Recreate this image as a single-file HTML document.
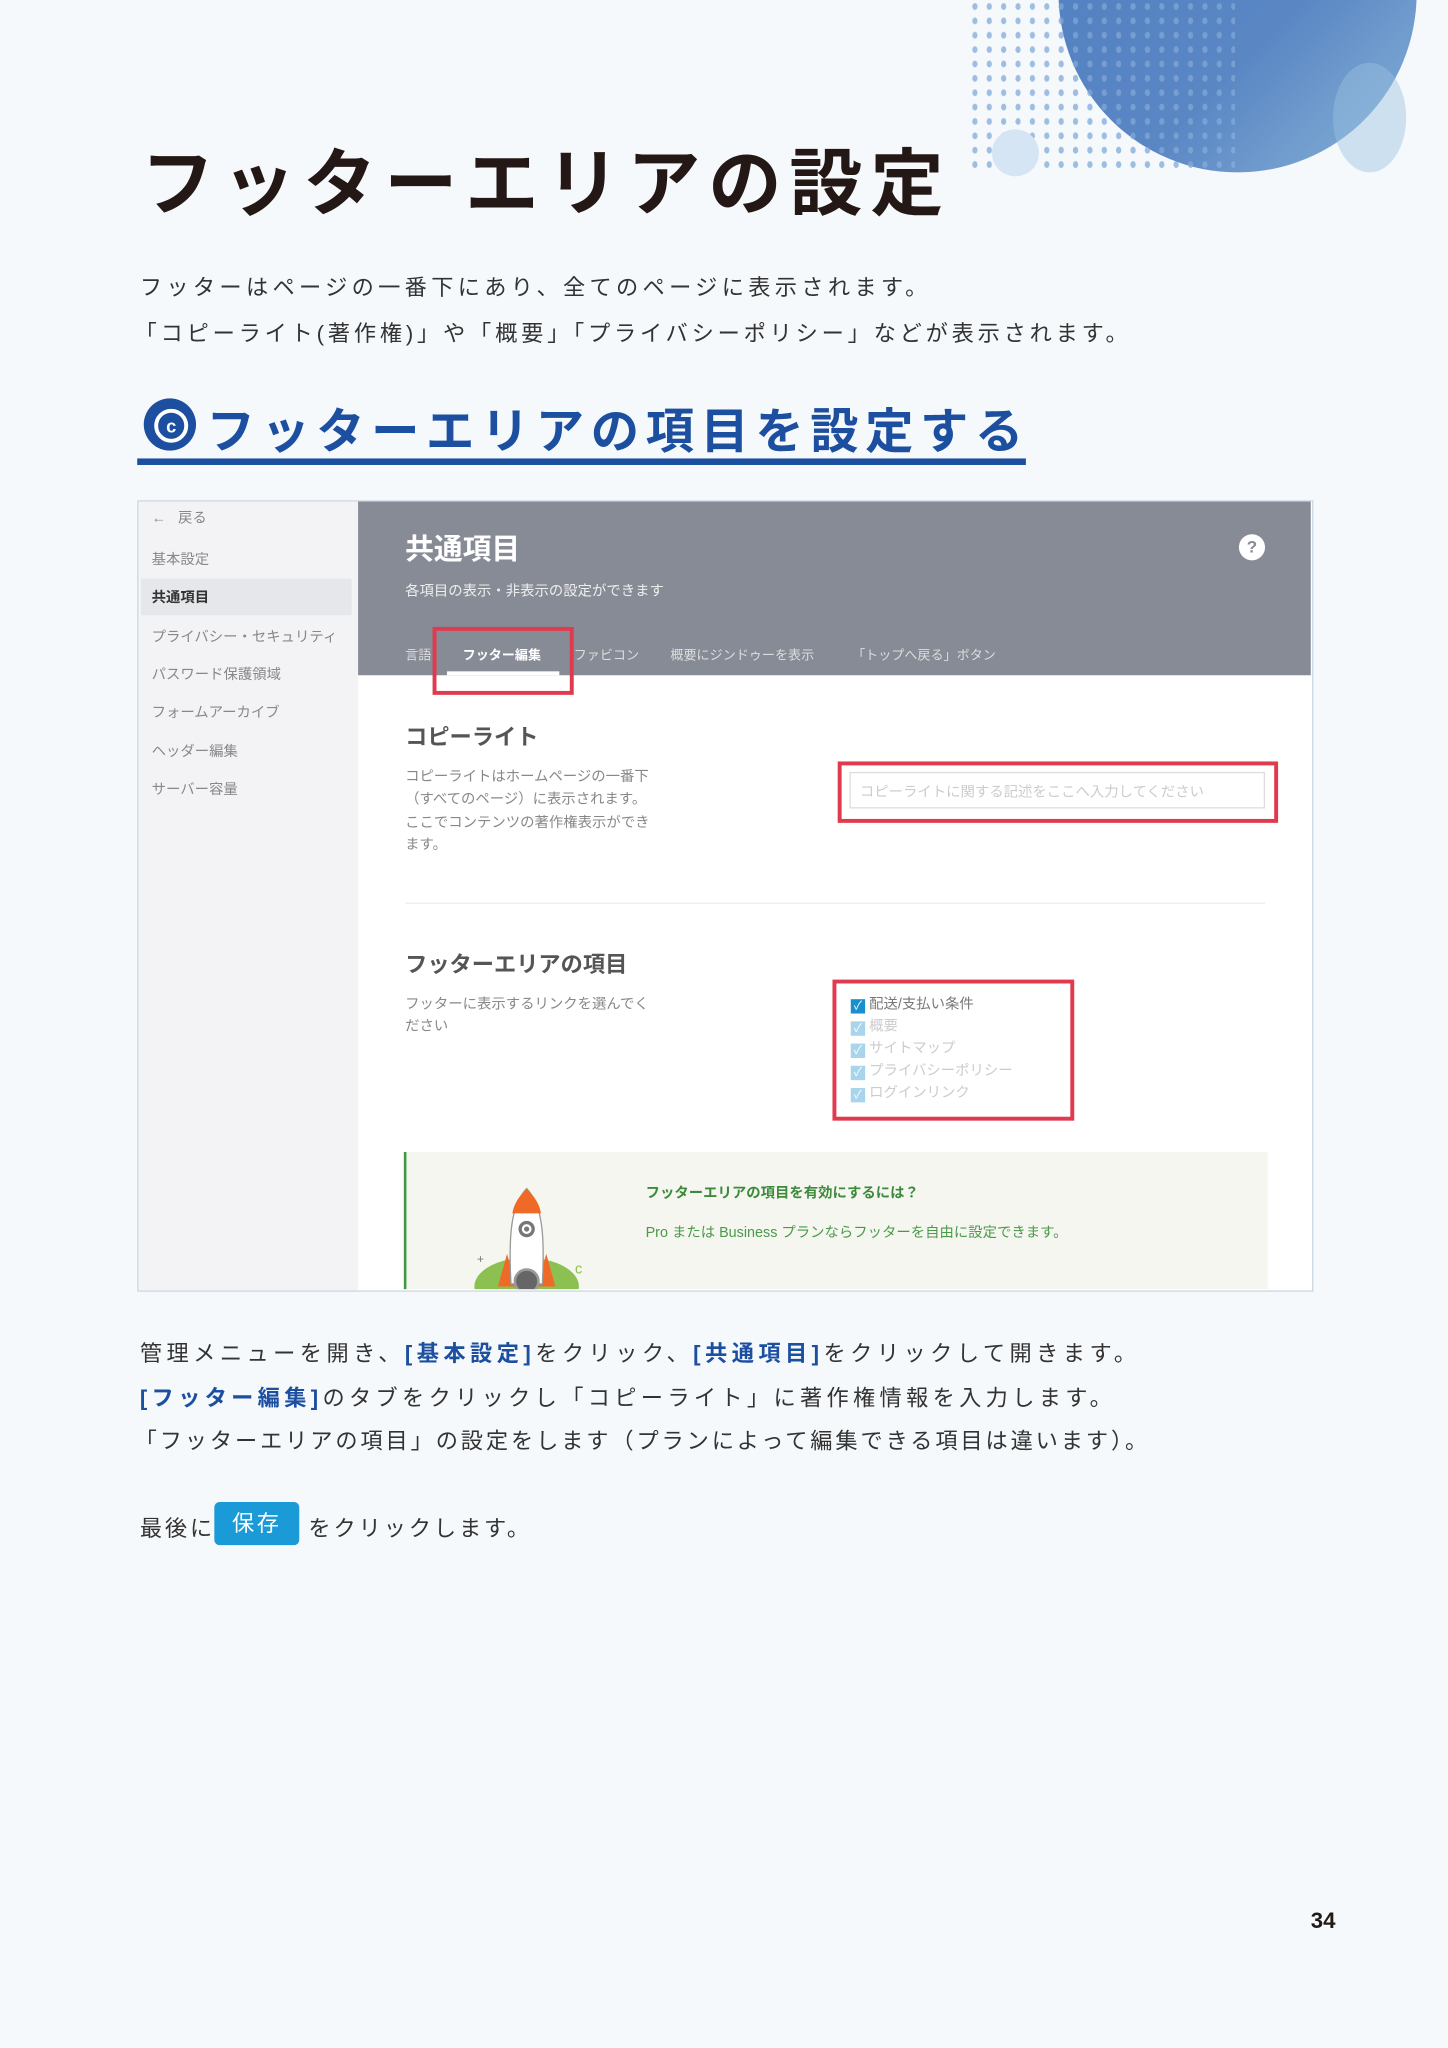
<!DOCTYPE html>
<html><head><meta charset="utf-8"><style>
html,body{margin:0;padding:0;width:1448px;height:2048px;overflow:hidden;background:#f6f9fb}
#w{position:absolute;left:0;top:0;width:1108px;height:1568px;transform:scale(1.30686,1.30612);transform-origin:0 0;font-family:"Liberation Sans","Noto Sans CJK JP",sans-serif;color:#333}
.a{position:absolute;white-space:nowrap}
.sb{font-size:11px;color:#888;left:116px}
.blue{color:#1c4fa0;font-weight:bold}
</style></head><body><div id="w">
<svg class="a" style="left:730px;top:0" width="378" height="160">
<defs><pattern id="p" x="0" y="0" width="11" height="11" patternUnits="userSpaceOnUse"><ellipse cx="5" cy="5" rx="2" ry="2.6" fill="#9dbde3"/></pattern>
<linearGradient id="g" x1="0" y1="0" x2="1" y2="1"><stop offset="0" stop-color="#4f7fc0"/><stop offset="0.6" stop-color="#5a86c4"/><stop offset="1" stop-color="#88b4d8"/></linearGradient></defs>
<rect x="10" y="0" width="205" height="133" fill="url(#p)"/>
<circle cx="217" cy="-5" r="137" fill="url(#g)"/>
<rect x="80" y="0" width="135" height="133" fill="url(#p)" opacity="0.45"/>
<ellipse cx="318" cy="90" rx="28" ry="42" fill="#9cc2e0" opacity="0.45"/>
<circle cx="47" cy="117" r="18" fill="#d6e5f4"/>
</svg>
<div class="a" style="left:108px;top:96px;font-size:56px;font-weight:bold;color:#231815;letter-spacing:6px">フッターエリアの設定</div>
<div class="a" style="left:107px;top:206px;font-size:17px;color:#333;letter-spacing:3.3px">フッターはページの一番下にあり、全てのページに表示されます。</div>
<div class="a" style="left:103px;top:241px;font-size:17px;color:#333;letter-spacing:2.9px">「コピーライト(著作権)」や「概要」「プライバシーポリシー」などが表示されます。</div>
<div class="a" style="left:110px;top:305px;width:40px;height:40px;border-radius:50%;background:#1c4fa0"></div>
<div class="a" style="left:118px;top:313px;width:20px;height:20px;border-radius:50%;border:3px solid #fff;color:#fff;font-size:14px;font-weight:bold;text-align:center;line-height:20px">c</div>
<div class="a" style="left:158px;top:300px;font-size:37px;font-weight:bold;color:#1c4fa0;letter-spacing:5px">フッターエリアの項目を設定する</div>
<div class="a" style="left:105px;top:351px;width:680px;height:5px;background:#1c4fa0"></div>
<div class="a" style="left:105px;top:383px;width:898px;height:604px;border:1px solid #c9d6e2;background:#fff;overflow:hidden">
 <div class="a" style="left:0;top:0;width:168px;height:604px;background:#f3f3f5"></div>
 <div class="a" style="left:2px;top:59px;width:161px;height:28px;background:#e6e7eb"></div>
</div>
<div class="a sb" style="top:388px">←&nbsp;&nbsp;&nbsp;戻る</div>
<div class="a sb" style="top:420px">基本設定</div>
<div class="a sb" style="top:449px;color:#333;font-weight:bold">共通項目</div>
<div class="a sb" style="top:479px">プライバシー・セキュリティ</div>
<div class="a sb" style="top:508px">パスワード保護領域</div>
<div class="a sb" style="top:537px">フォームアーカイブ</div>
<div class="a sb" style="top:567px">ヘッダー編集</div>
<div class="a sb" style="top:596px">サーバー容量</div>
<div class="a" style="left:274px;top:384px;width:729px;height:133px;background:#878b96"></div>
<div class="a" style="left:310px;top:403px;font-size:22px;font-weight:bold;color:#fff">共通項目</div>
<div class="a" style="left:310px;top:444px;font-size:11px;color:#eee">各項目の表示・非表示の設定ができます</div>
<div class="a" style="left:948px;top:409px;width:20px;height:20px;border-radius:50%;background:#fff;color:#878b96;font-size:13px;font-weight:bold;text-align:center;line-height:20px">?</div>
<div class="a" style="left:310px;top:493px;font-size:10px;color:#ddd">言語</div>
<div class="a" style="left:354px;top:493px;font-size:10px;color:#fff;font-weight:bold">フッター編集</div>
<div class="a" style="left:342px;top:514px;width:86px;height:3px;background:#fff"></div>
<div class="a" style="left:439px;top:493px;font-size:10px;color:#ddd">ファビコン</div>
<div class="a" style="left:513px;top:493px;font-size:10px;color:#ddd">概要にジンドゥーを表示</div>
<div class="a" style="left:652px;top:493px;font-size:10px;color:#ddd">「トップへ戻る」ボタン</div>
<div class="a" style="left:331px;top:480px;width:102px;height:46px;border:3px solid #e03a4e"></div>
<div class="a" style="left:310px;top:550px;font-size:17px;color:#555;font-weight:bold">コピーライト</div>
<div class="a" style="left:310px;top:587px;font-size:11px;color:#888;line-height:17.4px">コピーライトはホームページの一番下<br>（すべてのページ）に表示されます。<br>ここでコンテンツの著作権表示ができ<br>ます。</div>
<div class="a" style="left:650px;top:591px;width:318px;height:28px;border:1px solid #ddd;box-sizing:border-box"></div>
<div class="a" style="left:658px;top:598px;font-size:11px;color:#ccc">コピーライトに関する記述をここへ入力してください</div>
<div class="a" style="left:641px;top:583px;width:331px;height:41px;border:3px solid #e03a4e"></div>
<div class="a" style="left:310px;top:691px;width:658px;height:1px;background:#eee"></div>
<div class="a" style="left:310px;top:724px;font-size:17px;color:#555;font-weight:bold">フッターエリアの項目</div>
<div class="a" style="left:310px;top:761px;font-size:11px;color:#888;line-height:17.4px">フッターに表示するリンクを選んでく<br>ださい</div>
<div class="a" style="left:637px;top:750px;width:179px;height:102px;border:3px solid #e03a4e"></div>
<div class="a" style="left:651px;top:761px;font-size:11px;line-height:17px">
 <div><span style="display:inline-block;width:11px;height:11px;background:#1a8fd0;color:#fff;font-size:9px;line-height:11px;text-align:center;vertical-align:-1px">✓</span> <span style="color:#777">配送/支払い条件</span></div>
 <div style="color:#ccc"><span style="display:inline-block;width:11px;height:11px;background:#a8d4ec;color:#fff;font-size:9px;line-height:11px;text-align:center;vertical-align:-1px">✓</span> 概要</div>
 <div style="color:#ccc"><span style="display:inline-block;width:11px;height:11px;background:#a8d4ec;color:#fff;font-size:9px;line-height:11px;text-align:center;vertical-align:-1px">✓</span> サイトマップ</div>
 <div style="color:#ccc"><span style="display:inline-block;width:11px;height:11px;background:#a8d4ec;color:#fff;font-size:9px;line-height:11px;text-align:center;vertical-align:-1px">✓</span> プライバシーポリシー</div>
 <div style="color:#ccc"><span style="display:inline-block;width:11px;height:11px;background:#a8d4ec;color:#fff;font-size:9px;line-height:11px;text-align:center;vertical-align:-1px">✓</span> ログインリンク</div>
</div>
<div class="a" style="left:309px;top:882px;width:659px;height:105px;background:#f5f6ef;border-left:2px solid #3d9a42"></div>
<svg class="a" style="left:355px;top:905px" width="110" height="82">
 <ellipse cx="48" cy="80" rx="40" ry="22" fill="#8cc152"/>
 <path d="M33 55 L26 80 L40 80 Z M63 55 L70 80 L56 80 Z" fill="#ee6a26"/>
 <path d="M48 5 C36 18 34 40 36 78 L60 78 C62 40 60 18 48 5 Z" fill="#fff" stroke="#999" stroke-width="1"/>
 <path d="M48 5 C41 12 38 18 37 24 L59 24 C58 18 55 12 48 5 Z" fill="#ee6a26"/>
 <circle cx="48" cy="36" r="5" fill="#fff" stroke="#777" stroke-width="2.5"/>
 <circle cx="48" cy="36" r="2" fill="#777"/>
 <circle cx="48" cy="76" r="9" fill="#666" stroke="#999" stroke-width="2"/>
 <text x="85" y="70" font-size="11" fill="#8cc152">c</text>
 <text x="10" y="62" font-size="9" fill="#777">+</text>
</svg>
<div class="a" style="left:494px;top:905px;font-size:11px;font-weight:bold;color:#3d8a3d">フッターエリアの項目を有効にするには？</div>
<div class="a" style="left:494px;top:935px;font-size:11px;color:#4a9a4a">Pro または Business プランならフッターを自由に設定できます。</div>
<div class="a" style="left:107px;top:1022px;font-size:17px;letter-spacing:3.4px">管理メニューを開き、<span class="blue">[基本設定]</span>をクリック、<span class="blue">[共通項目]</span>をクリックして開きます。</div>
<div class="a" style="left:107px;top:1056px;font-size:17px;letter-spacing:3.3px"><span class="blue">[フッター編集]</span>のタブをクリックし「コピーライト」に著作権情報を入力します。</div>
<div class="a" style="left:103px;top:1089px;font-size:17px;letter-spacing:2.2px">「フッターエリアの項目」の設定をします（プランによって編集できる項目は違います）。</div>
<div class="a" style="left:107px;top:1156px;font-size:17px;letter-spacing:2.2px">最後に</div>
<div class="a" style="left:164px;top:1150px;width:65px;height:33px;border-radius:4px;background:#1a9ad6;color:#fff;font-size:17px;line-height:33px;text-align:center;letter-spacing:2px">保存</div>
<div class="a" style="left:236px;top:1156px;font-size:17px;letter-spacing:2.2px">をクリックします。</div>
<div class="a" style="left:1003px;top:1461px;font-size:17px;font-weight:bold;color:#231815">34</div>
</div></body></html>
